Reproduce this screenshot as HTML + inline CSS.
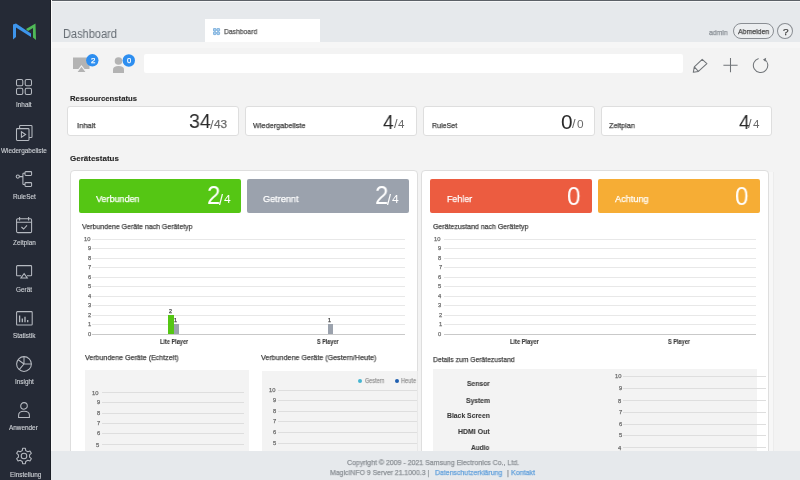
<!DOCTYPE html>
<html><head><meta charset="utf-8"><title>MagicINFO Dashboard</title>
<style>
html,body{margin:0;padding:0;width:800px;height:480px;overflow:hidden;background:#f3f3f3;}
body{position:relative;font-family:"Liberation Sans", sans-serif;}
.r{position:absolute;box-sizing:content-box;}
.t{position:absolute;white-space:nowrap;font-family:"Liberation Sans", sans-serif;will-change:transform;}
</style></head><body>
<div class="r" style="left:51px;top:0px;width:749px;height:42px;background:#e6e9ec;"></div>
<div class="r" style="left:51px;top:0px;width:749px;height:1px;background:#5c6167;"></div>
<div class="r" style="left:51px;top:1px;width:749px;height:1px;background:#f6f7f8;"></div>
<div class="r" style="left:51px;top:1px;width:1px;height:41px;background:#f6f7f8;"></div>
<div class="r" style="left:52px;top:42px;width:748px;height:6px;background:#f6f6f6;"></div>
<div class="r" style="left:0px;top:0px;width:51px;height:480px;background:#252a36;"></div>
<div class="r" style="left:49.5px;top:0px;width:1.5px;height:480px;background:#1b1e25;"></div>
<div class="r" style="left:51px;top:0px;width:1px;height:480px;background:#fafafa;"></div>
<svg class="r" style="left:0;top:0" width="51" height="60" viewBox="0 0 51 60">
<polygon points="13,24.5 16,23.5 31,33.5 31,37 16,27.5 16,37 13,39.5" fill="#3e95ec"/>
<polygon points="26,29 35.5,23.5 36,40 33,37.5 33,28 28,31" fill="#4fb957"/>
</svg>
<svg class="r" style="left:16px;top:79px;overflow:visible" width="17" height="17" viewBox="0 0 17 17" fill="none" stroke="#b6bac1" stroke-width="1.05"><rect x="0.5" y="0.5" width="6.3" height="6.3" rx="1.5"/><rect x="9.2" y="0.5" width="6.3" height="6.3" rx="1.5"/><rect x="0.5" y="9.2" width="6.3" height="6.3" rx="1.5"/><rect x="9.2" y="9.2" width="6.3" height="6.3" rx="1.5"/></svg>
<div class="t" style="left:16.23px;top:101.53px;font-size:6.40px;line-height:6.40px;color:#ced1d6;font-weight:normal;-webkit-text-stroke:0.12px currentColor;transform:scaleX(1.000);transform-origin:0 0;">Inhalt</div>
<svg class="r" style="left:16px;top:124.5px;overflow:visible" width="17" height="17" viewBox="0 0 17 17" fill="none" stroke="#b6bac1" stroke-width="1.05"><path d="M3.6 3.6 V1.3 Q3.6 0.5 4.4 0.5 H15.2 Q16 0.5 16 1.3 V11.7 Q16 12.5 15.2 12.5 H13"/><rect x="0.5" y="3.6" width="12.5" height="11.8" rx="0.8"/><path d="M5.4 6.7 L9.6 9.5 L5.4 12.3 Z"/></svg>
<div class="t" style="left:1.15px;top:147.58px;font-size:6.40px;line-height:6.40px;color:#ced1d6;font-weight:normal;-webkit-text-stroke:0.12px currentColor;transform:scaleX(1.000);transform-origin:0 0;">Wiedergabeliste</div>
<svg class="r" style="left:16px;top:171px;overflow:visible" width="17" height="17" viewBox="0 0 17 17" fill="none" stroke="#b6bac1" stroke-width="1.05"><circle cx="1.8" cy="5.6" r="1.6"/><path d="M3.4 5.6 H6.9 M6.9 2.2 V13.4 M6.9 2.2 H9 M6.9 13.4 H9"/><rect x="9" y="0.6" width="6.6" height="3.8" rx="0.8"/><rect x="9" y="11.6" width="6.6" height="3.8" rx="0.8"/></svg>
<div class="t" style="left:13.37px;top:194.43px;font-size:6.40px;line-height:6.40px;color:#ced1d6;font-weight:normal;-webkit-text-stroke:0.12px currentColor;transform:scaleX(1.000);transform-origin:0 0;">RuleSet</div>
<svg class="r" style="left:16px;top:216.8px;overflow:visible" width="17" height="17" viewBox="0 0 17 17" fill="none" stroke="#b6bac1" stroke-width="1.05"><rect x="0.6" y="1.8" width="15" height="13.8" rx="1.2"/><path d="M0.6 5.2 H15.6 M3.6 0 V3.4 M12.6 0 V3.4 M5.4 10 L7.6 12 L11 8.4"/></svg>
<div class="t" style="left:13.10px;top:240.48px;font-size:6.40px;line-height:6.40px;color:#ced1d6;font-weight:normal;-webkit-text-stroke:0.12px currentColor;transform:scaleX(1.000);transform-origin:0 0;">Zeitplan</div>
<svg class="r" style="left:16px;top:264.5px;overflow:visible" width="17" height="17" viewBox="0 0 17 17" fill="none" stroke="#b6bac1" stroke-width="1.05"><path d="M5.2 10.8 H1.4 Q0.6 10.8 0.6 10 V1.4 Q0.6 0.6 1.4 0.6 H14.8 Q15.6 0.6 15.6 1.4 V10 Q15.6 10.8 14.8 10.8 H11"/><path d="M8.1 8.6 L11.3 12.9 H4.9 Z"/></svg>
<div class="t" style="left:16.36px;top:286.53px;font-size:6.40px;line-height:6.40px;color:#ced1d6;font-weight:normal;-webkit-text-stroke:0.12px currentColor;transform:scaleX(1.000);transform-origin:0 0;">Ger&auml;t</div>
<svg class="r" style="left:16px;top:310.5px;overflow:visible" width="17" height="17" viewBox="0 0 17 17" fill="none" stroke="#b6bac1" stroke-width="1.05"><rect x="0.6" y="0.6" width="15.6" height="13.4" rx="0.8"/><path d="M3.6 4.6 V11.2 M6.3 7.4 V11.2 M9.0 5.8 V11.2 M11.7 9.0 V11.2" stroke-width="1.3"/></svg>
<div class="t" style="left:12.60px;top:332.58px;font-size:6.40px;line-height:6.40px;color:#ced1d6;font-weight:normal;-webkit-text-stroke:0.12px currentColor;transform:scaleX(1.000);transform-origin:0 0;">Statistik</div>
<svg class="r" style="left:16px;top:355.5px;overflow:visible" width="17" height="17" viewBox="0 0 17 17" fill="none" stroke="#b6bac1" stroke-width="1.05"><circle cx="8" cy="8" r="7.4"/><path d="M8 0.6 V8 H15.4 M8 8 L3.2 13.6 M8 8 L2.2 3.8"/></svg>
<div class="t" style="left:15.22px;top:379.43px;font-size:6.40px;line-height:6.40px;color:#ced1d6;font-weight:normal;-webkit-text-stroke:0.12px currentColor;transform:scaleX(1.000);transform-origin:0 0;">Insight</div>
<svg class="r" style="left:16px;top:402px;overflow:visible" width="17" height="17" viewBox="0 0 17 17" fill="none" stroke="#b6bac1" stroke-width="1.05"><circle cx="8" cy="3.9" r="3.3"/><path d="M2.6 15.5 V13.2 Q2.6 9.2 8 9.2 Q13.4 9.2 13.4 13.2 V15.5 Z"/></svg>
<div class="t" style="left:9.03px;top:425.48px;font-size:6.40px;line-height:6.40px;color:#ced1d6;font-weight:normal;-webkit-text-stroke:0.12px currentColor;transform:scaleX(1.000);transform-origin:0 0;">Anwender</div>
<svg class="r" style="left:16px;top:448px;overflow:visible" width="17" height="17" viewBox="0 0 17 17" fill="none" stroke="#b6bac1" stroke-width="1.05"><path d="M6.24 2.58 L6.62 0.32 L9.38 0.32 L9.76 2.58 L11.81 3.76 L13.96 2.97 L15.34 5.36 L13.58 6.81 L13.58 9.19 L15.34 10.64 L13.96 13.03 L11.81 12.24 L9.76 13.42 L9.38 15.68 L6.62 15.68 L6.24 13.42 L4.19 12.24 L2.04 13.03 L0.66 10.64 L2.42 9.19 L2.42 6.81 L0.66 5.36 L2.04 2.97 L4.19 3.76 Z" stroke-linejoin="round"/><circle cx="8" cy="8" r="2.8"/></svg>
<div class="t" style="left:9.59px;top:471.53px;font-size:6.40px;line-height:6.40px;color:#ced1d6;font-weight:normal;-webkit-text-stroke:0.12px currentColor;transform:scaleX(1.000);transform-origin:0 0;">Einstellung</div>
<div class="t" style="left:63.04px;top:28.76px;font-size:11.86px;line-height:11.86px;color:#656c73;font-weight:normal;transform:scaleX(0.928);transform-origin:0 0;">Dashboard</div>
<div class="r" style="left:204.5px;top:18.6px;width:115.5px;height:23.7px;background:#ffffff;"></div>
<svg class="r" style="left:213px;top:27.8px" width="8" height="8" viewBox="0 0 8 8" fill="#b4d2ee" stroke="#5d9fd6" stroke-width="0.75"><rect x="0.4" y="0.4" width="2.7" height="2.7" rx="0.7"/><rect x="3.9" y="0.4" width="2.7" height="2.7" rx="0.7"/><rect x="0.4" y="3.9" width="2.7" height="2.7" rx="0.7"/><rect x="3.9" y="3.9" width="2.7" height="2.7" rx="0.7"/></svg>
<div class="t" style="left:224.38px;top:28.26px;font-size:7.72px;line-height:7.72px;color:#555;font-weight:normal;-webkit-text-stroke:0.25px currentColor;transform:scaleX(0.879);transform-origin:0 0;">Dashboard</div>
<div class="t" style="left:708.71px;top:28.70px;font-size:7.38px;line-height:7.38px;color:#8a9096;font-weight:normal;-webkit-text-stroke:0.25px currentColor;transform:scaleX(0.927);transform-origin:0 0;">admin</div>
<div class="r" style="left:732.6px;top:23.3px;width:39.2px;height:14.2px;border:1px solid #8a8e93;border-radius:9px;background:#eceef0;"></div>
<div class="t" style="left:737.98px;top:28.28px;font-size:7.79px;line-height:7.79px;color:#444;font-weight:normal;-webkit-text-stroke:0.25px currentColor;transform:scaleX(0.889);transform-origin:0 0;">Abmelden</div>
<div class="r" style="left:777px;top:23.3px;width:14.4px;height:14.2px;border:1px solid #8a8e93;border-radius:50%;background:#eceef0;"></div>
<div class="t" style="left:782.56px;top:27.64px;font-size:8.60px;line-height:8.60px;color:#444;font-weight:normal;-webkit-text-stroke:0.25px currentColor;transform:scaleX(1.163);transform-origin:0 0;">?</div>
<svg class="r" style="left:60px;top:45px;overflow:visible" width="80" height="35" viewBox="0 0 80 35">
<rect x="13" y="12.5" width="16.5" height="11.5" fill="#b3b3b3"/>
<polygon points="21.5,21 26.5,27.5 16.5,27.5" fill="#b3b3b3" stroke="#f3f3f3" stroke-width="1.2"/>
<circle cx="32.3" cy="15.3" r="6.2" fill="#2d8ef0"/>
<circle cx="58.5" cy="16" r="3.8" fill="#b3b3b3"/>
<path d="M53 28 V24.5 Q53 21 58.5 21 Q64 21 64 24.5 V28 Z" fill="#b3b3b3"/>
<circle cx="68.8" cy="15.5" r="6.2" fill="#2d8ef0"/>
</svg>
<div class="t" style="left:90.52px;top:56.69px;font-size:7.46px;line-height:7.46px;color:#fff;font-weight:normal;-webkit-text-stroke:0.25px currentColor;transform:scaleX(1.061);transform-origin:0 0;">2</div>
<div class="t" style="left:126.70px;top:56.69px;font-size:7.46px;line-height:7.46px;color:#fff;font-weight:normal;-webkit-text-stroke:0.25px currentColor;transform:scaleX(1.011);transform-origin:0 0;">0</div>
<div class="r" style="left:143.7px;top:54.4px;width:539.7px;height:19px;background:#fff;border-radius:2px;"></div>
<svg class="r" style="left:690px;top:55px;overflow:visible" width="80" height="22" viewBox="0 0 80 22" fill="none" stroke="#707478" stroke-width="1.05">
<path d="M12.2 4.3 L16.9 8.6 L8.4 16.4 L3.3 17.3 L4.3 11.9 Z M4.3 11.9 L8.4 16.4" stroke-linejoin="round"/>
<path d="M40.5 3 V17.3 M33.4 10.2 H47.6"/>
<path d="M68.6 3.4 A7.2 7.2 0 1 0 74.2 4.1"/>
<polygon points="73.0,4.5 76.2,2.8 75.4,6.8" fill="#707478" stroke="none"/>
</svg>
<div class="t" style="left:70.33px;top:94.54px;font-size:7.64px;line-height:7.64px;color:#252525;font-weight:bold;-webkit-text-stroke:0.1px currentColor;transform:scaleX(1.015);transform-origin:0 0;">Ressourcenstatus</div>
<div class="r" style="left:67px;top:105.5px;width:169.5px;height:28px;background:#fff;border:1px solid #dedede;border-radius:3px;"></div>
<div class="t" style="left:76.86px;top:121.79px;font-size:8.00px;line-height:8.00px;color:#3c3c3c;font-weight:normal;-webkit-text-stroke:0.25px currentColor;transform:scaleX(0.949);transform-origin:0 0;">Inhalt</div>
<div class="r" style="left:244.5px;top:105.5px;width:170.5px;height:28px;background:#fff;border:1px solid #dedede;border-radius:3px;"></div>
<div class="t" style="left:253.31px;top:121.79px;font-size:8.00px;line-height:8.00px;color:#3c3c3c;font-weight:normal;-webkit-text-stroke:0.25px currentColor;transform:scaleX(0.915);transform-origin:0 0;">Wiedergabeliste</div>
<div class="r" style="left:422.5px;top:105.5px;width:170.0px;height:28px;background:#fff;border:1px solid #dedede;border-radius:3px;"></div>
<div class="t" style="left:431.96px;top:121.79px;font-size:8.00px;line-height:8.00px;color:#3c3c3c;font-weight:normal;-webkit-text-stroke:0.25px currentColor;transform:scaleX(0.883);transform-origin:0 0;">RuleSet</div>
<div class="r" style="left:600.5px;top:105.5px;width:169.0px;height:28px;background:#fff;border:1px solid #dedede;border-radius:3px;"></div>
<div class="t" style="left:609.17px;top:121.79px;font-size:8.00px;line-height:8.00px;color:#3c3c3c;font-weight:normal;-webkit-text-stroke:0.25px currentColor;transform:scaleX(0.912);transform-origin:0 0;">Zeitplan</div>
<div class="t" style="left:188.52px;top:111.46px;font-size:20.65px;line-height:20.65px;color:#2a2a2a;font-weight:normal;transform:scaleX(0.948);transform-origin:0 0;">34</div>
<div class="t" style="left:209.80px;top:118.64px;font-size:12.80px;line-height:12.80px;color:#666;font-weight:normal;transform:scaleX(1.000);transform-origin:0 0;">/</div>
<div class="t" style="left:214.45px;top:119.04px;font-size:10.75px;line-height:10.75px;color:#6b6b6b;font-weight:normal;-webkit-text-stroke:0.25px currentColor;transform:scaleX(1.099);transform-origin:0 0;">43</div>
<div class="t" style="left:383.32px;top:111.50px;font-size:20.73px;line-height:20.73px;color:#2a2a2a;font-weight:normal;transform:scaleX(0.931);transform-origin:0 0;">4</div>
<div class="t" style="left:393.75px;top:118.44px;font-size:12.80px;line-height:12.80px;color:#666;font-weight:normal;transform:scaleX(1.000);transform-origin:0 0;">/</div>
<div class="t" style="left:397.97px;top:118.20px;font-size:11.64px;line-height:11.64px;color:#6b6b6b;font-weight:normal;transform:scaleX(0.953);transform-origin:0 0;">4</div>
<div class="t" style="left:560.93px;top:111.70px;font-size:20.79px;line-height:20.79px;color:#2a2a2a;font-weight:normal;transform:scaleX(0.982);transform-origin:0 0;">0</div>
<div class="t" style="left:571.50px;top:117.94px;font-size:12.80px;line-height:12.80px;color:#666;font-weight:normal;transform:scaleX(1.000);transform-origin:0 0;">/</div>
<div class="t" style="left:576.84px;top:119.29px;font-size:11.83px;line-height:11.83px;color:#6b6b6b;font-weight:normal;transform:scaleX(0.974);transform-origin:0 0;">0</div>
<div class="t" style="left:738.62px;top:111.50px;font-size:20.73px;line-height:20.73px;color:#2a2a2a;font-weight:normal;transform:scaleX(0.931);transform-origin:0 0;">4</div>
<div class="t" style="left:748.25px;top:118.44px;font-size:12.80px;line-height:12.80px;color:#666;font-weight:normal;transform:scaleX(1.000);transform-origin:0 0;">/</div>
<div class="t" style="left:752.87px;top:118.20px;font-size:11.64px;line-height:11.64px;color:#6b6b6b;font-weight:normal;transform:scaleX(0.953);transform-origin:0 0;">4</div>
<div class="t" style="left:69.68px;top:155.09px;font-size:7.89px;line-height:7.89px;color:#252525;font-weight:bold;-webkit-text-stroke:0.1px currentColor;transform:scaleX(1.015);transform-origin:0 0;">Ger&auml;testatus</div>
<div class="r" style="left:70px;top:170px;width:346px;height:320px;background:#fff;border:1px solid #dedede;border-radius:4px;"></div>
<div class="r" style="left:769px;top:172px;width:4px;height:280px;background:#f7f7f7;"></div>
<div class="r" style="left:773px;top:172px;width:1px;height:280px;background:#ececec;"></div>
<div class="r" style="left:421px;top:170px;width:346px;height:320px;background:#fff;border:1px solid #dedede;border-radius:4px;"></div>
<div class="r" style="left:79px;top:179.2px;width:162px;height:33.6px;background:#55c614;border-radius:2px;"></div>
<div class="t" style="left:95.92px;top:193.78px;font-size:9.60px;line-height:9.60px;color:#fff;font-weight:normal;-webkit-text-stroke:0.25px currentColor;transform:scaleX(0.938);transform-origin:0 0;">Verbunden</div>
<div class="r" style="left:247px;top:179.2px;width:162px;height:33.6px;background:#9ba2ad;border-radius:2px;"></div>
<div class="t" style="left:263.49px;top:193.78px;font-size:9.60px;line-height:9.60px;color:#fff;font-weight:normal;-webkit-text-stroke:0.25px currentColor;transform:scaleX(0.951);transform-origin:0 0;">Getrennt</div>
<div class="r" style="left:430px;top:179.2px;width:162px;height:33.6px;background:#ec5c40;border-radius:2px;"></div>
<div class="t" style="left:447.07px;top:193.78px;font-size:9.60px;line-height:9.60px;color:#fff;font-weight:normal;-webkit-text-stroke:0.25px currentColor;transform:scaleX(0.923);transform-origin:0 0;">Fehler</div>
<div class="r" style="left:598px;top:179.2px;width:162px;height:33.6px;background:#f6ad35;border-radius:2px;"></div>
<div class="t" style="left:614.88px;top:193.78px;font-size:9.60px;line-height:9.60px;color:#fff;font-weight:normal;-webkit-text-stroke:0.25px currentColor;transform:scaleX(0.954);transform-origin:0 0;">Achtung</div>
<div class="t" style="left:206.88px;top:183.12px;font-size:25.09px;line-height:25.09px;color:#fff;font-weight:normal;transform:scaleX(0.959);transform-origin:0 0;">2</div>
<div class="t" style="left:219.00px;top:193.40px;font-size:14.00px;line-height:14.00px;color:#fff;font-weight:normal;transform:scaleX(1.030);transform-origin:0 0;">/</div>
<div class="t" style="left:223.95px;top:194.49px;font-size:11.49px;line-height:11.49px;color:#fff;font-weight:normal;transform:scaleX(1.051);transform-origin:0 0;">4</div>
<div class="t" style="left:374.88px;top:183.12px;font-size:25.09px;line-height:25.09px;color:#fff;font-weight:normal;transform:scaleX(0.959);transform-origin:0 0;">2</div>
<div class="t" style="left:387.00px;top:193.40px;font-size:14.00px;line-height:14.00px;color:#fff;font-weight:normal;transform:scaleX(1.030);transform-origin:0 0;">/</div>
<div class="t" style="left:391.95px;top:194.49px;font-size:11.49px;line-height:11.49px;color:#fff;font-weight:normal;transform:scaleX(1.051);transform-origin:0 0;">4</div>
<div class="t" style="left:567.32px;top:183.70px;font-size:25.52px;line-height:25.52px;color:#fff;font-weight:normal;transform:scaleX(0.944);transform-origin:0 0;">0</div>
<div class="t" style="left:735.32px;top:183.70px;font-size:25.52px;line-height:25.52px;color:#fff;font-weight:normal;transform:scaleX(0.944);transform-origin:0 0;">0</div>
<div class="t" style="left:81.99px;top:222.50px;font-size:7.64px;line-height:7.64px;color:#444;font-weight:normal;-webkit-text-stroke:0.25px currentColor;transform:scaleX(0.915);transform-origin:0 0;">Verbundene Ger&auml;te nach Ger&auml;tetyp</div>
<div class="r" style="left:92px;top:239px;width:312.7px;height:1px;background:#e8e8e8;"></div>
<div class="t" style="left:84.32px;top:237.45px;font-size:5.80px;line-height:5.80px;color:#6e6e6e;font-weight:normal;-webkit-text-stroke:0.25px currentColor;transform:scaleX(1.000);transform-origin:0 0;">10</div>
<div class="r" style="left:92px;top:248px;width:312.7px;height:1px;background:#e8e8e8;"></div>
<div class="t" style="left:88.38px;top:246.45px;font-size:5.80px;line-height:5.80px;color:#6e6e6e;font-weight:normal;-webkit-text-stroke:0.25px currentColor;transform:scaleX(1.000);transform-origin:0 0;">9</div>
<div class="r" style="left:92px;top:258px;width:312.7px;height:1px;background:#e8e8e8;"></div>
<div class="t" style="left:88.37px;top:256.45px;font-size:5.80px;line-height:5.80px;color:#6e6e6e;font-weight:normal;-webkit-text-stroke:0.25px currentColor;transform:scaleX(1.000);transform-origin:0 0;">8</div>
<div class="r" style="left:92px;top:267px;width:312.7px;height:1px;background:#e8e8e8;"></div>
<div class="t" style="left:88.41px;top:265.45px;font-size:5.80px;line-height:5.80px;color:#6e6e6e;font-weight:normal;-webkit-text-stroke:0.25px currentColor;transform:scaleX(1.000);transform-origin:0 0;">7</div>
<div class="r" style="left:92px;top:277px;width:312.7px;height:1px;background:#e8e8e8;"></div>
<div class="t" style="left:88.37px;top:275.45px;font-size:5.80px;line-height:5.80px;color:#6e6e6e;font-weight:normal;-webkit-text-stroke:0.25px currentColor;transform:scaleX(1.000);transform-origin:0 0;">6</div>
<div class="r" style="left:92px;top:286px;width:312.7px;height:1px;background:#e8e8e8;"></div>
<div class="t" style="left:88.35px;top:284.45px;font-size:5.80px;line-height:5.80px;color:#6e6e6e;font-weight:normal;-webkit-text-stroke:0.25px currentColor;transform:scaleX(1.000);transform-origin:0 0;">5</div>
<div class="r" style="left:92px;top:296px;width:312.7px;height:1px;background:#e8e8e8;"></div>
<div class="t" style="left:88.28px;top:294.45px;font-size:5.80px;line-height:5.80px;color:#6e6e6e;font-weight:normal;-webkit-text-stroke:0.25px currentColor;transform:scaleX(1.000);transform-origin:0 0;">4</div>
<div class="r" style="left:92px;top:305px;width:312.7px;height:1px;background:#e8e8e8;"></div>
<div class="t" style="left:88.37px;top:303.45px;font-size:5.80px;line-height:5.80px;color:#6e6e6e;font-weight:normal;-webkit-text-stroke:0.25px currentColor;transform:scaleX(1.000);transform-origin:0 0;">3</div>
<div class="r" style="left:92px;top:315px;width:312.7px;height:1px;background:#e8e8e8;"></div>
<div class="t" style="left:88.41px;top:313.45px;font-size:5.80px;line-height:5.80px;color:#6e6e6e;font-weight:normal;-webkit-text-stroke:0.25px currentColor;transform:scaleX(1.000);transform-origin:0 0;">2</div>
<div class="r" style="left:92px;top:324px;width:312.7px;height:1px;background:#e8e8e8;"></div>
<div class="t" style="left:88.40px;top:322.45px;font-size:5.80px;line-height:5.80px;color:#6e6e6e;font-weight:normal;-webkit-text-stroke:0.25px currentColor;transform:scaleX(1.000);transform-origin:0 0;">1</div>
<div class="r" style="left:92px;top:334px;width:312.7px;height:1px;background:#c9c9c9;"></div>
<div class="t" style="left:88.34px;top:332.45px;font-size:5.80px;line-height:5.80px;color:#6e6e6e;font-weight:normal;-webkit-text-stroke:0.25px currentColor;transform:scaleX(1.000);transform-origin:0 0;">0</div>
<div class="r" style="left:168px;top:315px;width:6px;height:19px;background:#55c614;"></div>
<div class="r" style="left:174px;top:324px;width:5px;height:10px;background:#9ba2ad;"></div>
<div class="r" style="left:327.5px;top:324px;width:5.5px;height:10px;background:#9ba2ad;"></div>
<div class="t" style="left:169.39px;top:309.27px;font-size:5.40px;line-height:5.40px;color:#444;font-weight:normal;-webkit-text-stroke:0.25px currentColor;transform:scaleX(1.000);transform-origin:0 0;">2</div>
<div class="t" style="left:174.38px;top:318.39px;font-size:5.40px;line-height:5.40px;color:#444;font-weight:normal;-webkit-text-stroke:0.25px currentColor;transform:scaleX(1.000);transform-origin:0 0;">1</div>
<div class="t" style="left:328.34px;top:318.39px;font-size:5.40px;line-height:5.40px;color:#444;font-weight:normal;-webkit-text-stroke:0.25px currentColor;transform:scaleX(1.000);transform-origin:0 0;">1</div>
<div class="t" style="left:159.52px;top:339.41px;font-size:6.55px;line-height:6.55px;color:#3a3a3a;font-weight:bold;-webkit-text-stroke:0.1px currentColor;transform:scaleX(0.852);transform-origin:0 0;">Lite Player</div>
<div class="t" style="left:316.80px;top:339.41px;font-size:6.55px;line-height:6.55px;color:#3a3a3a;font-weight:bold;-webkit-text-stroke:0.1px currentColor;transform:scaleX(0.834);transform-origin:0 0;">S Player</div>
<div class="t" style="left:432.61px;top:222.59px;font-size:7.53px;line-height:7.53px;color:#444;font-weight:normal;-webkit-text-stroke:0.25px currentColor;transform:scaleX(0.929);transform-origin:0 0;">Ger&auml;tezustand nach Ger&auml;tetyp</div>
<div class="r" style="left:443.7px;top:239px;width:312.0px;height:1px;background:#e8e8e8;"></div>
<div class="t" style="left:434.42px;top:237.45px;font-size:5.80px;line-height:5.80px;color:#6e6e6e;font-weight:normal;-webkit-text-stroke:0.25px currentColor;transform:scaleX(1.000);transform-origin:0 0;">10</div>
<div class="r" style="left:443.7px;top:248px;width:312.0px;height:1px;background:#e8e8e8;"></div>
<div class="t" style="left:438.48px;top:246.45px;font-size:5.80px;line-height:5.80px;color:#6e6e6e;font-weight:normal;-webkit-text-stroke:0.25px currentColor;transform:scaleX(1.000);transform-origin:0 0;">9</div>
<div class="r" style="left:443.7px;top:258px;width:312.0px;height:1px;background:#e8e8e8;"></div>
<div class="t" style="left:438.47px;top:256.45px;font-size:5.80px;line-height:5.80px;color:#6e6e6e;font-weight:normal;-webkit-text-stroke:0.25px currentColor;transform:scaleX(1.000);transform-origin:0 0;">8</div>
<div class="r" style="left:443.7px;top:267px;width:312.0px;height:1px;background:#e8e8e8;"></div>
<div class="t" style="left:438.51px;top:265.45px;font-size:5.80px;line-height:5.80px;color:#6e6e6e;font-weight:normal;-webkit-text-stroke:0.25px currentColor;transform:scaleX(1.000);transform-origin:0 0;">7</div>
<div class="r" style="left:443.7px;top:277px;width:312.0px;height:1px;background:#e8e8e8;"></div>
<div class="t" style="left:438.47px;top:275.45px;font-size:5.80px;line-height:5.80px;color:#6e6e6e;font-weight:normal;-webkit-text-stroke:0.25px currentColor;transform:scaleX(1.000);transform-origin:0 0;">6</div>
<div class="r" style="left:443.7px;top:286px;width:312.0px;height:1px;background:#e8e8e8;"></div>
<div class="t" style="left:438.45px;top:284.45px;font-size:5.80px;line-height:5.80px;color:#6e6e6e;font-weight:normal;-webkit-text-stroke:0.25px currentColor;transform:scaleX(1.000);transform-origin:0 0;">5</div>
<div class="r" style="left:443.7px;top:296px;width:312.0px;height:1px;background:#e8e8e8;"></div>
<div class="t" style="left:438.38px;top:294.45px;font-size:5.80px;line-height:5.80px;color:#6e6e6e;font-weight:normal;-webkit-text-stroke:0.25px currentColor;transform:scaleX(1.000);transform-origin:0 0;">4</div>
<div class="r" style="left:443.7px;top:305px;width:312.0px;height:1px;background:#e8e8e8;"></div>
<div class="t" style="left:438.47px;top:303.45px;font-size:5.80px;line-height:5.80px;color:#6e6e6e;font-weight:normal;-webkit-text-stroke:0.25px currentColor;transform:scaleX(1.000);transform-origin:0 0;">3</div>
<div class="r" style="left:443.7px;top:315px;width:312.0px;height:1px;background:#e8e8e8;"></div>
<div class="t" style="left:438.51px;top:313.45px;font-size:5.80px;line-height:5.80px;color:#6e6e6e;font-weight:normal;-webkit-text-stroke:0.25px currentColor;transform:scaleX(1.000);transform-origin:0 0;">2</div>
<div class="r" style="left:443.7px;top:324px;width:312.0px;height:1px;background:#e8e8e8;"></div>
<div class="t" style="left:438.50px;top:322.45px;font-size:5.80px;line-height:5.80px;color:#6e6e6e;font-weight:normal;-webkit-text-stroke:0.25px currentColor;transform:scaleX(1.000);transform-origin:0 0;">1</div>
<div class="r" style="left:443.7px;top:334px;width:312.0px;height:1px;background:#c9c9c9;"></div>
<div class="t" style="left:438.44px;top:332.45px;font-size:5.80px;line-height:5.80px;color:#6e6e6e;font-weight:normal;-webkit-text-stroke:0.25px currentColor;transform:scaleX(1.000);transform-origin:0 0;">0</div>
<div class="t" style="left:510.46px;top:339.41px;font-size:6.55px;line-height:6.55px;color:#3a3a3a;font-weight:bold;-webkit-text-stroke:0.1px currentColor;transform:scaleX(0.869);transform-origin:0 0;">Lite Player</div>
<div class="t" style="left:667.75px;top:339.41px;font-size:6.55px;line-height:6.55px;color:#3a3a3a;font-weight:bold;-webkit-text-stroke:0.1px currentColor;transform:scaleX(0.850);transform-origin:0 0;">S Player</div>
<div class="t" style="left:84.98px;top:353.67px;font-size:7.42px;line-height:7.42px;color:#444;font-weight:normal;-webkit-text-stroke:0.25px currentColor;transform:scaleX(0.954);transform-origin:0 0;">Verbundene Ger&auml;te (Echtzeit)</div>
<div class="r" style="left:85px;top:369.75px;width:163.5px;height:110.25px;background:#f3f3f3;"></div>
<div class="r" style="left:102px;top:392px;width:141.9px;height:1px;background:#dedede;"></div>
<div class="t" style="left:92.06px;top:390.77px;font-size:5.80px;line-height:5.80px;color:#6e6e6e;font-weight:normal;-webkit-text-stroke:0.25px currentColor;transform:scaleX(1.000);transform-origin:0 0;">10</div>
<div class="r" style="left:102px;top:402px;width:141.9px;height:1px;background:#dedede;"></div>
<div class="t" style="left:96.60px;top:400.45px;font-size:5.80px;line-height:5.80px;color:#6e6e6e;font-weight:normal;-webkit-text-stroke:0.25px currentColor;transform:scaleX(1.000);transform-origin:0 0;">9</div>
<div class="r" style="left:102px;top:413px;width:141.9px;height:1px;background:#dedede;"></div>
<div class="t" style="left:96.59px;top:411.45px;font-size:5.80px;line-height:5.80px;color:#6e6e6e;font-weight:normal;-webkit-text-stroke:0.25px currentColor;transform:scaleX(1.000);transform-origin:0 0;">8</div>
<div class="r" style="left:102px;top:423px;width:141.9px;height:1px;background:#dedede;"></div>
<div class="t" style="left:96.63px;top:421.45px;font-size:5.80px;line-height:5.80px;color:#6e6e6e;font-weight:normal;-webkit-text-stroke:0.25px currentColor;transform:scaleX(1.000);transform-origin:0 0;">7</div>
<div class="r" style="left:102px;top:433px;width:141.9px;height:1px;background:#dedede;"></div>
<div class="t" style="left:96.59px;top:431.45px;font-size:5.80px;line-height:5.80px;color:#6e6e6e;font-weight:normal;-webkit-text-stroke:0.25px currentColor;transform:scaleX(1.000);transform-origin:0 0;">6</div>
<div class="r" style="left:102px;top:444px;width:141.9px;height:1px;background:#dedede;"></div>
<div class="t" style="left:96.09px;top:442.77px;font-size:5.80px;line-height:5.80px;color:#6e6e6e;font-weight:normal;-webkit-text-stroke:0.25px currentColor;transform:scaleX(1.000);transform-origin:0 0;">5</div>
<div class="r" style="left:102px;top:454px;width:141.9px;height:1px;background:#dedede;"></div>
<div class="t" style="left:96.50px;top:452.45px;font-size:5.80px;line-height:5.80px;color:#6e6e6e;font-weight:normal;-webkit-text-stroke:0.25px currentColor;transform:scaleX(1.000);transform-origin:0 0;">4</div>
<div class="t" style="left:260.96px;top:353.67px;font-size:7.42px;line-height:7.42px;color:#444;font-weight:normal;-webkit-text-stroke:0.25px currentColor;transform:scaleX(0.963);transform-origin:0 0;">Verbundene Ger&auml;te (Gestern/Heute)</div>
<div class="r" style="left:261.5px;top:370.8px;width:159.5px;height:109.2px;background:#f3f3f3;"></div>
<div class="r" style="left:277.5px;top:390px;width:140.5px;height:1px;background:#dedede;"></div>
<div class="t" style="left:268.76px;top:388.45px;font-size:5.80px;line-height:5.80px;color:#6e6e6e;font-weight:normal;-webkit-text-stroke:0.25px currentColor;transform:scaleX(1.000);transform-origin:0 0;">10</div>
<div class="r" style="left:277.5px;top:400px;width:140.5px;height:1px;background:#dedede;"></div>
<div class="t" style="left:272.82px;top:398.45px;font-size:5.80px;line-height:5.80px;color:#6e6e6e;font-weight:normal;-webkit-text-stroke:0.25px currentColor;transform:scaleX(1.000);transform-origin:0 0;">9</div>
<div class="r" style="left:277.5px;top:411px;width:140.5px;height:1px;background:#dedede;"></div>
<div class="t" style="left:272.81px;top:409.45px;font-size:5.80px;line-height:5.80px;color:#6e6e6e;font-weight:normal;-webkit-text-stroke:0.25px currentColor;transform:scaleX(1.000);transform-origin:0 0;">8</div>
<div class="r" style="left:277.5px;top:421px;width:140.5px;height:1px;background:#dedede;"></div>
<div class="t" style="left:272.85px;top:419.45px;font-size:5.80px;line-height:5.80px;color:#6e6e6e;font-weight:normal;-webkit-text-stroke:0.25px currentColor;transform:scaleX(1.000);transform-origin:0 0;">7</div>
<div class="r" style="left:277.5px;top:432px;width:140.5px;height:1px;background:#dedede;"></div>
<div class="t" style="left:272.81px;top:430.45px;font-size:5.80px;line-height:5.80px;color:#6e6e6e;font-weight:normal;-webkit-text-stroke:0.25px currentColor;transform:scaleX(1.000);transform-origin:0 0;">6</div>
<div class="r" style="left:277.5px;top:443px;width:140.5px;height:1px;background:#dedede;"></div>
<div class="t" style="left:272.79px;top:441.45px;font-size:5.80px;line-height:5.80px;color:#6e6e6e;font-weight:normal;-webkit-text-stroke:0.25px currentColor;transform:scaleX(1.000);transform-origin:0 0;">5</div>
<div class="r" style="left:277.5px;top:453px;width:140.5px;height:1px;background:#dedede;"></div>
<div class="t" style="left:272.72px;top:451.45px;font-size:5.80px;line-height:5.80px;color:#6e6e6e;font-weight:normal;-webkit-text-stroke:0.25px currentColor;transform:scaleX(1.000);transform-origin:0 0;">4</div>
<div class="r" style="left:417px;top:371px;width:1px;height:81px;background:#e8e8e8;"></div>
<div class="r" style="left:358px;top:379.3px;width:4px;height:4px;border-radius:50%;background:#45b5d1"></div>
<div class="t" style="left:364.55px;top:378.34px;font-size:6.59px;line-height:6.59px;color:#9a9a9a;font-weight:normal;-webkit-text-stroke:0.25px currentColor;transform:scaleX(0.832);transform-origin:0 0;">Gestern</div>
<div class="r" style="left:394.6px;top:379.3px;width:4px;height:4px;border-radius:50%;background:#1f5fb0"></div>
<div class="t" style="left:400.52px;top:378.26px;font-size:6.69px;line-height:6.69px;color:#9a9a9a;font-weight:normal;-webkit-text-stroke:0.25px currentColor;transform:scaleX(0.841);transform-origin:0 0;">Heute</div>
<div class="t" style="left:433.24px;top:355.52px;font-size:7.56px;line-height:7.56px;color:#444;font-weight:normal;-webkit-text-stroke:0.25px currentColor;transform:scaleX(0.896);transform-origin:0 0;">Details zum Ger&auml;tezustand</div>
<div class="r" style="left:432.5px;top:368.8px;width:324.0px;height:111.2px;background:#f3f3f3;"></div>
<div class="t" style="left:466.70px;top:380.47px;font-size:7.60px;line-height:7.60px;color:#3a3a3a;font-weight:bold;-webkit-text-stroke:0.1px currentColor;transform:scaleX(0.885);transform-origin:0 0;">Sensor</div>
<div class="t" style="left:465.70px;top:397.57px;font-size:7.17px;line-height:7.17px;color:#3a3a3a;font-weight:bold;-webkit-text-stroke:0.1px currentColor;transform:scaleX(0.946);transform-origin:0 0;">System</div>
<div class="t" style="left:446.54px;top:413.10px;font-size:6.69px;line-height:6.69px;color:#3a3a3a;font-weight:bold;-webkit-text-stroke:0.1px currentColor;transform:scaleX(1.020);transform-origin:0 0;">Black Screen</div>
<div class="t" style="left:457.51px;top:428.03px;font-size:6.98px;line-height:6.98px;color:#3a3a3a;font-weight:bold;-webkit-text-stroke:0.1px currentColor;transform:scaleX(0.995);transform-origin:0 0;">HDMI Out</div>
<div class="t" style="left:470.84px;top:444.69px;font-size:7.13px;line-height:7.13px;color:#3a3a3a;font-weight:bold;-webkit-text-stroke:0.1px currentColor;transform:scaleX(0.912);transform-origin:0 0;">Audio</div>
<div class="r" style="left:622.5px;top:376px;width:143.0px;height:1px;background:#dedede;"></div>
<div class="t" style="left:614.54px;top:374.45px;font-size:5.80px;line-height:5.80px;color:#6e6e6e;font-weight:normal;-webkit-text-stroke:0.25px currentColor;transform:scaleX(1.000);transform-origin:0 0;">10</div>
<div class="r" style="left:622.5px;top:388px;width:143.0px;height:1px;background:#dedede;"></div>
<div class="t" style="left:618.60px;top:386.45px;font-size:5.80px;line-height:5.80px;color:#6e6e6e;font-weight:normal;-webkit-text-stroke:0.25px currentColor;transform:scaleX(1.000);transform-origin:0 0;">9</div>
<div class="r" style="left:622.5px;top:400px;width:143.0px;height:1px;background:#dedede;"></div>
<div class="t" style="left:618.11px;top:398.77px;font-size:5.80px;line-height:5.80px;color:#6e6e6e;font-weight:normal;-webkit-text-stroke:0.25px currentColor;transform:scaleX(1.000);transform-origin:0 0;">8</div>
<div class="r" style="left:622.5px;top:412px;width:143.0px;height:1px;background:#dedede;"></div>
<div class="t" style="left:618.63px;top:410.45px;font-size:5.80px;line-height:5.80px;color:#6e6e6e;font-weight:normal;-webkit-text-stroke:0.25px currentColor;transform:scaleX(1.000);transform-origin:0 0;">7</div>
<div class="r" style="left:622.5px;top:424px;width:143.0px;height:1px;background:#dedede;"></div>
<div class="t" style="left:618.59px;top:422.45px;font-size:5.80px;line-height:5.80px;color:#6e6e6e;font-weight:normal;-webkit-text-stroke:0.25px currentColor;transform:scaleX(1.000);transform-origin:0 0;">6</div>
<div class="r" style="left:622.5px;top:435px;width:143.0px;height:1px;background:#dedede;"></div>
<div class="t" style="left:618.57px;top:433.45px;font-size:5.80px;line-height:5.80px;color:#6e6e6e;font-weight:normal;-webkit-text-stroke:0.25px currentColor;transform:scaleX(1.000);transform-origin:0 0;">5</div>
<div class="r" style="left:622.5px;top:447px;width:143.0px;height:1px;background:#dedede;"></div>
<div class="t" style="left:618.02px;top:445.77px;font-size:5.80px;line-height:5.80px;color:#6e6e6e;font-weight:normal;-webkit-text-stroke:0.25px currentColor;transform:scaleX(1.000);transform-origin:0 0;">4</div>
<div class="r" style="left:51px;top:451.2px;width:749px;height:28.8px;background:#e6e9ec;"></div>
<div class="t" style="left:346.57px;top:458.76px;font-size:7.31px;line-height:7.31px;color:#8c9196;font-weight:normal;-webkit-text-stroke:0.25px currentColor;transform:scaleX(0.957);transform-origin:0 0;">Copyright &copy; 2009 - 2021 Samsung Electronics Co., Ltd.</div>
<div class="t" style="left:330.37px;top:468.70px;font-size:7.42px;line-height:7.42px;color:#8c9196;font-weight:normal;-webkit-text-stroke:0.25px currentColor;transform:scaleX(0.932);transform-origin:0 0;">MagicINFO 9 Server 21.1000.3 |</div>
<div class="t" style="left:435.27px;top:468.70px;font-size:7.42px;line-height:7.42px;color:#64a2dc;font-weight:normal;-webkit-text-stroke:0.25px currentColor;transform:scaleX(0.933);transform-origin:0 0;">Datenschutzerkl&auml;rung</div>
<div class="t" style="left:507.22px;top:468.70px;font-size:7.42px;line-height:7.42px;color:#8c9196;font-weight:normal;-webkit-text-stroke:0.25px currentColor;transform:scaleX(0.932);transform-origin:0 0;">|</div>
<div class="t" style="left:511.35px;top:468.70px;font-size:7.42px;line-height:7.42px;color:#64a2dc;font-weight:normal;-webkit-text-stroke:0.25px currentColor;transform:scaleX(0.960);transform-origin:0 0;">Kontakt</div>
</body></html>
